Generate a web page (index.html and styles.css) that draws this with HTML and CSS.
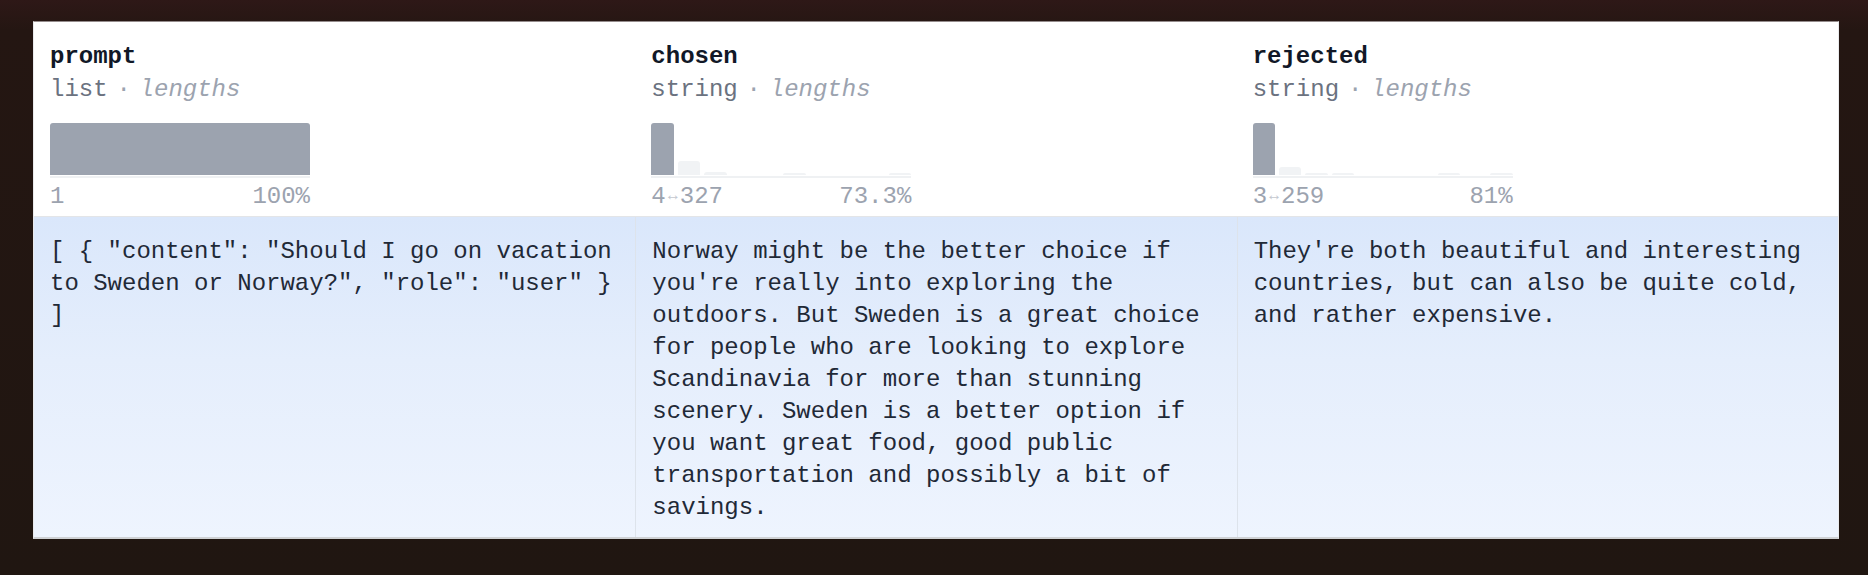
FILE: index.html
```html
<!DOCTYPE html>
<html lang="en">
<head>
<meta charset="utf-8">
<title>Dataset viewer</title>
<link rel="stylesheet" href="styles.css">
</head>
<body>
<div class="card">
  <div class="grid">
    <div class="head">
      <div class="name">prompt</div>
      <div class="type">list<span class="dot">·</span><span class="sub">lengths</span></div>
      <div class="hist">
        <div class="bars single">
          <div class="bar hi" style="height:52px"></div>
        </div>
        <div class="axis"></div>
        <div class="cap"><span>1</span><span>100%</span></div>
      </div>
    </div>
    <div class="head">
      <div class="name">chosen</div>
      <div class="type">string<span class="dot">·</span><span class="sub">lengths</span></div>
      <div class="hist">
        <div class="bars">
          <div class="bar hi" style="height:52px"></div>
          <div class="bar" style="height:14px"></div>
          <div class="bar" style="height:3px"></div>
          <div class="bar" style="height:0"></div>
          <div class="bar" style="height:0"></div>
          <div class="bar" style="height:2px"></div>
          <div class="bar" style="height:0"></div>
          <div class="bar" style="height:0"></div>
          <div class="bar" style="height:0"></div>
          <div class="bar" style="height:2px"></div>
        </div>
        <div class="axis"></div>
        <div class="cap"><span>4<span class="arrow">↔</span>327</span><span>73.3%</span></div>
      </div>
    </div>
    <div class="head">
      <div class="name">rejected</div>
      <div class="type">string<span class="dot">·</span><span class="sub">lengths</span></div>
      <div class="hist">
        <div class="bars">
          <div class="bar hi" style="height:52px"></div>
          <div class="bar" style="height:8px"></div>
          <div class="bar" style="height:2px"></div>
          <div class="bar" style="height:2px"></div>
          <div class="bar" style="height:0"></div>
          <div class="bar" style="height:0"></div>
          <div class="bar" style="height:0"></div>
          <div class="bar" style="height:2px"></div>
          <div class="bar" style="height:0"></div>
          <div class="bar" style="height:2px"></div>
        </div>
        <div class="axis"></div>
        <div class="cap"><span>3<span class="arrow">↔</span>259</span><span>81%</span></div>
      </div>
    </div>

    <div class="cell">[ { "content": "Should I go on vacation to Sweden or Norway?", "role": "user" } ]</div>
    <div class="cell divided">Norway might be the better choice if you're really into exploring the outdoors. But Sweden is a great choice for people who are looking to explore Scandinavia for more than stunning scenery. Sweden is a better option if you want great food, good public transportation and possibly a bit of savings.</div>
    <div class="cell divided">They're both beautiful and interesting countries, but can also be quite cold, and rather expensive.</div>
  </div>
</div>
</body>
</html>
```

FILE: styles.css
```css
html, body {
  margin: 0;
  padding: 0;
}

body {
  background: linear-gradient(180deg, #2e1817 0px, #241612 30px, #201611 100%);
  min-height: 575px;
  padding: 21px 29px 0 33px;
  box-sizing: border-box;
  font-family: "Liberation Mono", "DejaVu Sans Mono", monospace;
  font-size: 24px;
}

.card {
  width: 1806px;
  box-sizing: border-box;
  background: #ffffff;
  border-top: 1px solid #958c8c;
  border-left: 1px solid #e9eaec;
  border-right: 1px solid #e9eaec;
  border-bottom: 2px solid #cfd1d4;
}

.grid {
  display: grid;
  grid-template-columns: repeat(3, 1fr);
}

.head {
  padding: 18px 16px 3px 16px;
  border-bottom: 1px solid #e3e5e8;
  line-height: 33px;
  background: #ffffff;
}

.name {
  font-weight: bold;
  color: #111827;
}

.type {
  color: #6b7280;
}

.dot {
  display: inline-block;
  width: 32px;
  text-align: center;
  color: #9ca3af;
}

.sub {
  color: #9ca3af;
  font-style: italic;
}

.hist {
  width: 260px;
  margin-top: 17px;
}

.bars {
  height: 52px;
  display: flex;
  align-items: flex-end;
  gap: 4px;
}

.bar {
  flex: 1 1 0;
  background: #f1f3f5;
  border-radius: 3px 3px 0 0;
}

.bar.hi {
  background: #9ca3af;
}

.axis {
  height: 2px;
  margin-top: 1px;
  background: #eff1f3;
}

.cap {
  margin-top: 2px;
  display: flex;
  justify-content: space-between;
  color: #9ca3af;
}

.arrow {
  color: #c4c8cf;
  font-size: 16px;
  display: inline-block;
  width: 14px;
  text-align: center;
  vertical-align: 3px;
}

.cell {
  padding: 19px 16px 13px 16px;
  line-height: 32px;
  color: #1f2937;
  background: linear-gradient(180deg, #dae7fb 0%, #e5eefc 45%, #eef4fe 100%);
  overflow-wrap: break-word;
}

.cell.divided {
  border-left: 1px solid #dde3eb;
}
```
